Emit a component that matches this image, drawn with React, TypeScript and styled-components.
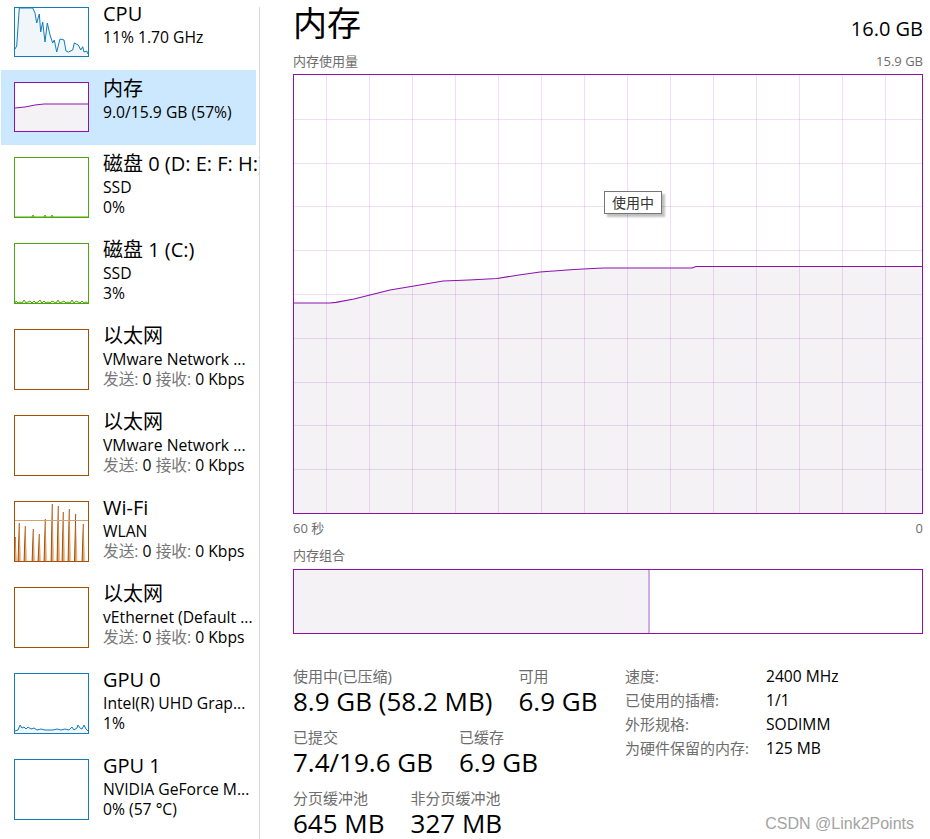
import React from 'react';
import styled, { createGlobalStyle } from 'styled-components';

const GlobalStyle = createGlobalStyle`
  html, body { margin: 0; padding: 0; background: #fff; }
  body {
    font-family: "Open Sans", "Noto Sans CJK SC", sans-serif;
    color: #000;
  }
  * { box-sizing: border-box; }
`;

const PURPLE = '#8b12ae';
const GRAY = '#6d6d6d';

const Window = styled.div`
  display: flex;
  width: 930px;
  height: 839px;
  overflow: hidden;
  background: #fff;
  position: relative;
`;

const Sidebar = styled.div`
  width: 260px;
  flex: none;
  overflow: hidden;
  position: relative;
  &::after {
    content: '';
    position: absolute;
    right: 0;
    top: 7px;
    bottom: 0;
    width: 1px;
    background: #d9d9d9;
  }
`;

const List = styled.div`
  display: flex;
  flex-direction: column;
  margin-top: -5px;
`;

const Item = styled.div<{ $h: number; $selected?: boolean }>`
  display: flex;
  align-items: flex-start;
  gap: 14px;
  height: ${(p) => p.$h}px;
  margin: 0 4px 0 1px;
  padding: 6px 0 0 13px;
  background: ${(p) => (p.$selected ? '#cce8ff' : 'transparent')};
  white-space: nowrap;
`;

const Thumb = styled.div<{ $color: string; $h: number }>`
  flex: none;
  width: 75px;
  height: ${(p) => p.$h}px;
  margin-top: 6px;
  border: 1px solid ${(p) => p.$color};
  background: #fff;
  svg { display: block; }
`;

const ItemText = styled.div`
  display: flex;
  flex-direction: column;
  min-width: 0;
`;

const ItemTitle = styled.div`
  font-size: 20px;
  line-height: 26px;
`;

const ItemSub = styled.div`
  font-size: 15.7px;
  line-height: 20px;
`;

const Dim = styled.span`
  color: #767676;
`;

const Main = styled.div`
  flex: 1;
  display: flex;
  flex-direction: column;
  padding: 0 7px 0 33px;
`;

const Header = styled.div`
  display: flex;
  justify-content: space-between;
  align-items: baseline;
  height: 53px;
`;

const PageTitle = styled.div`
  font-size: 34px;
  line-height: 46px;
`;

const Capacity = styled.div`
  font-size: 20px;
  line-height: 46px;
`;

const AxisRow = styled.div<{ $mt?: number }>`
  display: flex;
  justify-content: space-between;
  font-size: 13px;
  line-height: 16px;
  color: ${GRAY};
  margin-top: ${(p) => p.$mt ?? 0}px;
`;

const ChartBox = styled.div`
  position: relative;
  margin-top: 5px;
  height: 440px;
  border: 1px solid ${PURPLE};
  svg { display: block; }
`;

const Tooltip = styled.div`
  position: absolute;
  left: 310px;
  top: 116px;
  padding: 0 7px;
  height: 23px;
  line-height: 21px;
  font-size: 14px;
  color: #333;
  background: #fff;
  border: 1px solid #767676;
  box-shadow: 3px 3px 2px rgba(0, 0, 0, 0.25);
`;

const CompBar = styled.div`
  display: flex;
  height: 65px;
  margin-top: 6px;
  border: 1px solid ${PURPLE};
`;

const CompUsed = styled.div<{ $pct: number }>`
  width: ${(p) => p.$pct}%;
  background: #f4f2f5;
  border-right: 2px solid #d3acdf;
`;

const Stats = styled.div`
  display: flex;
  margin-top: 33px;
`;

const StatCol = styled.div`
  width: 332px;
  flex: none;
  display: flex;
  flex-direction: column;
  gap: 11px;
`;

const StatRow = styled.div`
  display: flex;
  gap: 26px;
`;

const Stat = styled.div`
  display: flex;
  flex-direction: column;
`;

const StatLabel = styled.div`
  font-size: 15px;
  line-height: 18px;
  color: ${GRAY};
  white-space: nowrap;
`;

const StatValue = styled.div`
  font-size: 26px;
  line-height: 32px;
  white-space: nowrap;
`;

const Specs = styled.div`
  display: grid;
  grid-template-columns: 141px auto;
  grid-auto-rows: 24px;
  align-content: start;
  margin-top: -3px;
  line-height: 24px;
`;

const SpecLabel = styled.div`
  font-size: 15px;
  color: ${GRAY};
  white-space: nowrap;
`;

const SpecValue = styled.div`
  font-size: 15.6px;
  white-space: nowrap;
`;

const Watermark = styled.div`
  position: absolute;
  right: 16px;
  bottom: 6px;
  font-family: "Liberation Sans", Arial, sans-serif;
  font-size: 16px;
  color: #a3a3a3;
`;

type Pt = [number, number];

const toPath = (pts: Pt[]) => pts.map((p, i) => `${i ? 'L' : 'M'}${p[0]},${p[1]}`).join(' ');

const AreaGraph: React.FC<{ w: number; h: number; pts: Pt[]; color: string; fill: string; sw?: number }> = ({
  w,
  h,
  pts,
  color,
  fill,
  sw = 1,
}) => {
  const line = toPath(pts);
  const area = `${line} L${w},${h} L0,${h} Z`;
  return (
    <svg width={w} height={h} viewBox={`0 0 ${w} ${h}`}>
      <path d={area} fill={fill} />
      <path d={line} fill="none" stroke={color} strokeWidth={sw} />
    </svg>
  );
};

const cpuPts: Pt[] = [
  [0, 41], [1.7, 38], [4.3, 0], [17.7, 0], [20, 5], [21.7, 15], [24.3, 6], [25.7, 24], [27.7, 14],
  [30, 34], [32.3, 15], [35, 27], [37.7, 35], [39.3, 32], [41.7, 44], [45, 31], [49, 32], [51, 43],
  [53.3, 44], [57.7, 42], [59.3, 35], [63.3, 37], [65.7, 42], [67.7, 38.7], [69, 44], [71.7, 43], [73, 46],
];
const memPts: Pt[] = [[0, 25], [10, 24], [20, 22], [29, 21], [73, 21]];
const disk0Pts: Pt[] = [[0, 59], [17, 59], [18, 57], [19, 59], [29, 59], [30, 57], [31, 59], [36, 59], [37, 57], [38, 59], [73, 59]];
const disk1Pts: Pt[] = (() => {
  const out: Pt[] = [[0, 59]];
  const hs = [2, 0, 1, 0, 3, 0, 1, 2, 0, 2, 0, 1, 3, 0, 2, 0, 1, 0, 2, 1, 0, 3, 0, 1, 2, 0, 1, 0, 3, 0, 2, 1, 0, 2, 0, 1];
  hs.forEach((v, i) => out.push([i * 2 + 1, 59 - v]));
  out.push([73, 59]);
  return out;
})();
const gpu0Pts: Pt[] = [
  [0, 57], [3, 56], [5, 51], [7, 54], [9, 53], [11, 55], [13, 53], [16, 55], [19, 54], [22, 56], [26, 55],
  [30, 56], [34, 56], [38, 56], [42, 55], [46, 56], [50, 55], [54, 56], [57, 53], [59, 56], [62, 54], [63, 51],
  [65, 54], [67, 55], [69, 51], [71, 55], [73, 57],
];

const wifiSpikes: Pt[] = [
  [0.3, 35], [4.3, 21], [10.3, 24], [18.3, 27], [24.3, 32], [30.3, 17], [37.3, 2], [43.3, 4],
  [48.3, 10], [54.3, 7], [60.7, 12], [68.3, 22],
];

const WifiGraph: React.FC = () => (
  <svg width={73} height={59} viewBox="0 0 73 59">
    <defs>
      <linearGradient id="spk" x1="0" x2="1" y1="0" y2="0">
        <stop offset="0" stopColor="#c77a35" />
        <stop offset="1" stopColor="#f3dcc6" />
      </linearGradient>
    </defs>
    {wifiSpikes.map(([x, t], i) => (
      <g key={i}>
        <path d={`M${x - 1.2},59 L${x},${t} L${x + 2},59 Z`} fill="url(#spk)" />
        <path d={`M${x - 1.2},59 L${x},${t}`} stroke="#a74f01" strokeWidth={1} fill="none" />
      </g>
    ))}
    <line x1={0} x2={73} y1={18.5} y2={18.5} stroke="#d7a273" strokeWidth={1} />
  </svg>
);

const BlankGraph: React.FC<{ h: number }> = ({ h }) => <svg width={73} height={h} />;

const MemoryChart: React.FC = () => {
  const w = 628;
  const h = 438;
  const linePts: Pt[] = [
    [0, 228], [36, 228], [42, 227.3], [60, 224], [76, 220], [96, 215], [120, 211], [149, 206], [175, 205],
    [203, 203.5], [225, 200], [246, 197], [280, 194.5], [299, 193.5], [310, 193], [398, 193], [402, 191.5], [628, 191.5],
  ];
  const line = toPath(linePts);
  const vx = Array.from({ length: 14 }, (_, k) => 32 + 43 * k);
  const hy = Array.from({ length: 9 }, (_, k) => Math.round(43.8 * (k + 1)) + 0.5);
  return (
    <svg width={w} height={h} viewBox={`0 0 ${w} ${h}`}>
      <path d={`${line} L${w},${h} L0,${h} Z`} fill="#f4f2f5" />
      {vx.map((x) => (
        <line key={`v${x}`} x1={x + 0.5} x2={x + 0.5} y1={0} y2={h} stroke="rgba(139,18,174,0.14)" />
      ))}
      {hy.map((y) => (
        <line key={`h${y}`} x1={0} x2={w} y1={y} y2={y} stroke="rgba(139,18,174,0.14)" />
      ))}
      <path d={line} fill="none" stroke={PURPLE} strokeWidth={1.2} />
    </svg>
  );
};

const C = {
  cpu: '#117dbb',
  cpuFill: '#f1f6fa',
  mem: PURPLE,
  memFill: '#f4f2f5',
  disk: '#4da60c',
  diskFill: '#eff7e9',
  net: '#a74f01',
};

const NetSub: React.FC = () => (
  <ItemSub>
    <Dim>发送:</Dim> 0 <Dim>接收:</Dim> 0 Kbps
  </ItemSub>
);

export default function App() {
  return (
    <>
      <GlobalStyle />
      <Window>
        <Sidebar>
          <List>
            <Item $h={75}>
              <Thumb $color={C.cpu} $h={50}>
                <AreaGraph w={73} h={48} pts={cpuPts} color={C.cpu} fill={C.cpuFill} />
              </Thumb>
              <ItemText>
                <ItemTitle>CPU</ItemTitle>
                <ItemSub>11% 1.70 GHz</ItemSub>
              </ItemText>
            </Item>
            <Item $h={75} $selected>
              <Thumb $color={C.mem} $h={50}>
                <AreaGraph w={73} h={48} pts={memPts} color={C.mem} fill={C.memFill} />
              </Thumb>
              <ItemText>
                <ItemTitle>内存</ItemTitle>
                <ItemSub>9.0/15.9 GB (57%)</ItemSub>
              </ItemText>
            </Item>
            <Item $h={86}>
              <Thumb $color={C.disk} $h={61}>
                <AreaGraph w={73} h={59} pts={disk0Pts} color={C.disk} fill={C.diskFill} />
              </Thumb>
              <ItemText>
                <ItemTitle>磁盘 0 (D: E: F: H:)</ItemTitle>
                <ItemSub>SSD</ItemSub>
                <ItemSub>0%</ItemSub>
              </ItemText>
            </Item>
            <Item $h={86}>
              <Thumb $color={C.disk} $h={61}>
                <AreaGraph w={73} h={59} pts={disk1Pts} color={C.disk} fill={C.diskFill} />
              </Thumb>
              <ItemText>
                <ItemTitle>磁盘 1 (C:)</ItemTitle>
                <ItemSub>SSD</ItemSub>
                <ItemSub>3%</ItemSub>
              </ItemText>
            </Item>
            <Item $h={86}>
              <Thumb $color={C.net} $h={61}>
                <BlankGraph h={59} />
              </Thumb>
              <ItemText>
                <ItemTitle>以太网</ItemTitle>
                <ItemSub>VMware Network ...</ItemSub>
                <NetSub />
              </ItemText>
            </Item>
            <Item $h={86}>
              <Thumb $color={C.net} $h={61}>
                <BlankGraph h={59} />
              </Thumb>
              <ItemText>
                <ItemTitle>以太网</ItemTitle>
                <ItemSub>VMware Network ...</ItemSub>
                <NetSub />
              </ItemText>
            </Item>
            <Item $h={86}>
              <Thumb $color={C.net} $h={61}>
                <WifiGraph />
              </Thumb>
              <ItemText>
                <ItemTitle>Wi-Fi</ItemTitle>
                <ItemSub>WLAN</ItemSub>
                <NetSub />
              </ItemText>
            </Item>
            <Item $h={86}>
              <Thumb $color={C.net} $h={61}>
                <BlankGraph h={59} />
              </Thumb>
              <ItemText>
                <ItemTitle>以太网</ItemTitle>
                <ItemSub>vEthernet (Default ...</ItemSub>
                <NetSub />
              </ItemText>
            </Item>
            <Item $h={86}>
              <Thumb $color={C.cpu} $h={61}>
                <AreaGraph w={73} h={59} pts={gpu0Pts} color={C.cpu} fill={C.cpuFill} />
              </Thumb>
              <ItemText>
                <ItemTitle>GPU 0</ItemTitle>
                <ItemSub>Intel(R) UHD Grap...</ItemSub>
                <ItemSub>1%</ItemSub>
              </ItemText>
            </Item>
            <Item $h={86}>
              <Thumb $color={C.cpu} $h={61}>
                <BlankGraph h={59} />
              </Thumb>
              <ItemText>
                <ItemTitle>GPU 1</ItemTitle>
                <ItemSub>NVIDIA GeForce M...</ItemSub>
                <ItemSub>0% (57 °C)</ItemSub>
              </ItemText>
            </Item>
          </List>
        </Sidebar>

        <Main>
          <Header>
            <PageTitle>内存</PageTitle>
            <Capacity>16.0 GB</Capacity>
          </Header>
          <AxisRow>
            <span>内存使用量</span>
            <span>15.9 GB</span>
          </AxisRow>
          <ChartBox>
            <MemoryChart />
            <Tooltip>使用中</Tooltip>
          </ChartBox>
          <AxisRow $mt={6}>
            <span>60 秒</span>
            <span>0</span>
          </AxisRow>
          <AxisRow $mt={11}>
            <span>内存组合</span>
          </AxisRow>
          <CompBar>
            <CompUsed $pct={56.7} />
          </CompBar>

          <Stats>
            <StatCol>
              <StatRow>
                <Stat>
                  <StatLabel>使用中(已压缩)</StatLabel>
                  <StatValue>8.9 GB (58.2 MB)</StatValue>
                </Stat>
                <Stat>
                  <StatLabel>可用</StatLabel>
                  <StatValue>6.9 GB</StatValue>
                </Stat>
              </StatRow>
              <StatRow>
                <Stat>
                  <StatLabel>已提交</StatLabel>
                  <StatValue>7.4/19.6 GB</StatValue>
                </Stat>
                <Stat>
                  <StatLabel>已缓存</StatLabel>
                  <StatValue>6.9 GB</StatValue>
                </Stat>
              </StatRow>
              <StatRow>
                <Stat>
                  <StatLabel>分页缓冲池</StatLabel>
                  <StatValue>645 MB</StatValue>
                </Stat>
                <Stat>
                  <StatLabel>非分页缓冲池</StatLabel>
                  <StatValue>327 MB</StatValue>
                </Stat>
              </StatRow>
            </StatCol>
            <Specs>
              <SpecLabel>速度:</SpecLabel>
              <SpecValue>2400 MHz</SpecValue>
              <SpecLabel>已使用的插槽:</SpecLabel>
              <SpecValue>1/1</SpecValue>
              <SpecLabel>外形规格:</SpecLabel>
              <SpecValue>SODIMM</SpecValue>
              <SpecLabel>为硬件保留的内存:</SpecLabel>
              <SpecValue>125 MB</SpecValue>
            </Specs>
          </Stats>
        </Main>
        <Watermark>CSDN @Link2Points</Watermark>
      </Window>
    </>
  );
}
